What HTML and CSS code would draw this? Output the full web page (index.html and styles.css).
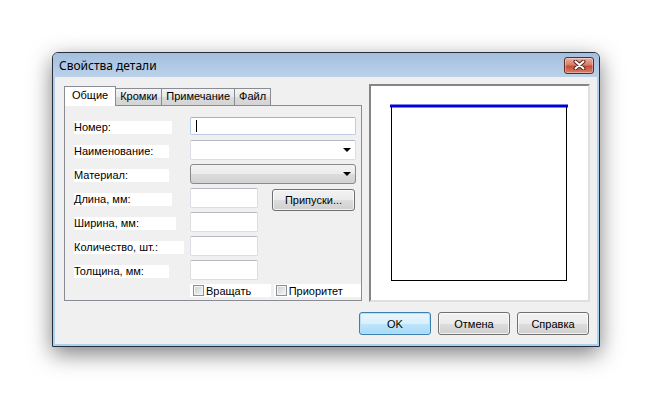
FILE: index.html
```html
<!DOCTYPE html>
<html lang="ru">
<head>
    <meta charset="UTF-8">
    <title>Свойства детали</title>
    <link rel="stylesheet" href="styles.css">
</head>
<body>
    <div class="window">
        <div class="titlebar">
            <span class="title">Свойства детали</span>
            <span class="close-btn">
                <svg width="13" height="10" viewBox="0 0 13 10">
                    <path d="M2.5 1.5 L10.5 8.5 M10.5 1.5 L2.5 8.5" stroke="#5a2118" stroke-width="4" stroke-linecap="round"/>
                    <path d="M2.5 1.5 L10.5 8.5 M10.5 1.5 L2.5 8.5" stroke="#fff" stroke-width="2" stroke-linecap="round"/>
                </svg>
            </span>
        </div>
        <div class="client">
            <div class="top-row">
                <div class="tabs">
                    <div class="tab-strip">
                        <div class="tab active">Общие</div>
                        <div class="tab">Кромки</div>
                        <div class="tab">Примечание</div>
                        <div class="tab">Файл</div>
                    </div>
                    <div class="tab-page">
                        <div class="row">
                            <div class="label"><span class="w98">Номер:</span></div>
                            <div class="field field-full field-focus"><span class="caret"></span></div>
                        </div>
                        <div class="row">
                            <div class="label"><span class="w95">Наименование:</span></div>
                            <div class="field field-full combo"><span class="arrow"></span></div>
                        </div>
                        <div class="row">
                            <div class="label"><span class="w95">Материал:</span></div>
                            <div class="combo-list"><span class="arrow"></span></div>
                        </div>
                        <div class="row">
                            <div class="label"><span class="w98">Длина, мм:</span></div>
                            <div class="field field-short"></div>
                            <button class="btn btn-small">Припуски...</button>
                        </div>
                        <div class="row">
                            <div class="label"><span class="w102">Ширина, мм:</span></div>
                            <div class="field field-short"></div>
                        </div>
                        <div class="row">
                            <div class="label"><span class="w110">Количество, шт.:</span></div>
                            <div class="field field-short"></div>
                        </div>
                        <div class="row">
                            <div class="label"><span class="w95">Толщина, мм:</span></div>
                            <div class="field field-short"></div>
                        </div>
                        <div class="check-row">
                            <label class="check check-rotate"><span class="box"></span>Вращать</label>
                            <label class="check check-priority"><span class="box"></span>Приоритет</label>
                        </div>
                    </div>
                </div>
                <div class="preview">
                    <svg width="217" height="214" viewBox="0 0 217 214">
                        <rect x="20.5" y="20.5" width="175" height="174" fill="none" stroke="#000" stroke-width="1"/>
                        <line x1="19" y1="20" x2="197" y2="20" stroke="#0000dd" stroke-width="3"/>
                    </svg>
                </div>
            </div>
            <div class="buttons">
                <button class="btn btn-default">OK</button>
                <button class="btn">Отмена</button>
                <button class="btn">Справка</button>
            </div>
        </div>
    </div>
</body>
</html>
```

FILE: styles.css
```css
* {
    margin: 0;
    padding: 0;
    box-sizing: border-box;
}

html,
body {
    min-height: 100vh;
}

body {
    background: #fff;
    font-family: "Liberation Sans", Arial, sans-serif;
    font-size: 11px;
    color: #000;
    padding: 52px 0 0 52px;
}

.window {
    width: 548px;
    height: 295px;
    border: 1px solid #25303c;
    border-radius: 6px 6px 0 0;
    background: linear-gradient(#b3cde9, #a9d3ee);
    box-shadow: 0 7px 22px rgba(0, 0, 0, 0.5);
    display: flex;
    flex-direction: column;
}

.titlebar {
    height: 24px;
    display: flex;
    align-items: center;
    justify-content: space-between;
    padding: 0 5px 0 6px;
    background: linear-gradient(#a4bedf, #bcd2ea);
    border-radius: 5px 5px 0 0;
}

.title {
    font-family: "Noto Sans", "Liberation Sans", sans-serif;
    font-size: 12px;
    color: #000;
}

.close-btn {
    width: 30px;
    height: 17px;
    border: 1px solid #5e2a22;
    border-radius: 3px;
    background: linear-gradient(#eab0a4, #d67e69 45%, #c54e35 55%, #d6826a);
    box-shadow: inset 0 0 0 1px rgba(255, 255, 255, 0.35);
    display: flex;
    align-items: center;
    justify-content: center;
}

.client {
    flex: 1;
    margin: 0 2px 2px;
    background: #f0f0f0;
    padding-top: 7px;
}

.top-row {
    display: flex;
    align-items: flex-start;
}

.tabs {
    margin-left: 9px;
    width: 298px;
    padding-top: 2px;
}

.tab-strip {
    display: flex;
    align-items: flex-end;
    height: 19px;
    position: relative;
    z-index: 1;
}

.tab {
    height: 17px;
    line-height: 15px;
    padding: 0 4px;
    margin-left: -1px;
    border: 1px solid #898c95;
    border-bottom: none;
    background: linear-gradient(#f4f4f4, #e8e8e8 50%, #dadada 51%, #d4d4d4);
}

.tab.active {
    height: 20px;
    line-height: 17px;
    margin-left: 0;
    margin-bottom: -1px;
    padding: 0 7px;
    background: #fff;
    position: relative;
    z-index: 2;
}

.tab-page {
    height: 196px;
    border: 1px solid #898c95;
    background: #f0f0f0;
    padding: 10px 0 0 9px;
    overflow: hidden;
}

.row {
    display: flex;
    align-items: center;
    height: 20px;
    margin-bottom: 4px;
}

.label {
    width: 116px;
    flex-shrink: 0;
}

.label span {
    display: block;
    height: 13px;
    line-height: 13px;
    background: #fff;
    margin-top: 3px;
}

.w95 { width: 95px; }
.w98 { width: 98px; }
.w102 { width: 102px; }
.w110 { width: 110px; }

.field {
    height: 20px;
    background: #fff;
    border: 1px solid #dadde3;
    border-top-color: #b5b8bf;
    border-radius: 2px;
    position: relative;
}

.field-full {
    width: 166px;
}

.field-short {
    width: 68px;
}

.field-focus {
    height: 18px;
    border-color: #b9cde4;
    border-top-color: #9fb4cf;
}

.caret {
    position: absolute;
    left: 5px;
    top: 2px;
    width: 1px;
    height: 12px;
    background: #000;
}

.combo,
.combo-list {
    display: flex;
    align-items: center;
    justify-content: flex-end;
    padding-right: 4px;
}

.combo-list {
    width: 166px;
    height: 20px;
    border: 1px solid #8a8a8a;
    border-radius: 3px;
    background: linear-gradient(#f3f3f3, #ebebeb 50%, #dcdcdc 51%, #d1d1d1);
}

.arrow {
    width: 0;
    height: 0;
    border-left: 4px solid transparent;
    border-right: 4px solid transparent;
    border-top: 4px solid #000;
}

.btn {
    width: 72px;
    height: 23px;
    border: 1px solid #707070;
    border-radius: 3px;
    background: linear-gradient(#f2f2f2, #ebebeb 50%, #dddddd 51%, #cfcfcf);
    box-shadow: inset 0 0 0 1px rgba(255, 255, 255, 0.7);
    font-family: "Liberation Sans", Arial, sans-serif;
    font-size: 11px;
    color: #000;
}

.btn-small {
    width: 83px;
    height: 22px;
    margin-left: 14px;
    margin-top: 4px;
}

.btn-default {
    border-color: #3c7fb1;
    background: linear-gradient(#eaf6fd, #d9f0fc 50%, #bee6fd 51%, #a7d9f5);
    box-shadow: inset 0 0 0 1px #b4e0f7;
}

.check-row {
    display: flex;
    padding-left: 116px;
    margin-top: 4px;
    height: 13px;
}

.check {
    display: flex;
    align-items: center;
    gap: 2px;
    height: 13px;
    padding-left: 3px;
    background: #fff;
}

.check-rotate {
    width: 83px;
}

.check-priority {
    width: 90px;
    margin-left: 3px;
    padding-left: 2px;
}

.box {
    width: 11px;
    height: 11px;
    border: 1px solid #8e8f8f;
    background: linear-gradient(135deg, #cbcfd5, #f6f6f6);
    box-shadow: inset 0 0 0 1px #f4f4f4;
}

.preview {
    margin-left: 7px;
    width: 221px;
    height: 218px;
    border: 2px solid;
    border-color: #858585 #dfdfdf #dfdfdf #858585;
    background: #fff;
}

.preview svg {
    display: block;
}

.buttons {
    display: flex;
    justify-content: flex-end;
    gap: 7px;
    margin-top: 10px;
    padding-right: 8px;
}
```
